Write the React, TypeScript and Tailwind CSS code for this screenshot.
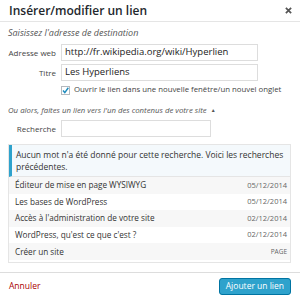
import React from "react";

const rows = [
  { t: "Éditeur de mise en page WYSIWYG", d: "05/12/2014", alt: true },
  { t: "Les bases de WordPress", d: "05/12/2014", alt: false },
  { t: "Accès à l'administration de votre site", d: "02/12/2014", alt: true },
  { t: "WordPress, qu'est ce que c'est ?", d: "02/12/2014", alt: false },
  { t: "Créer un site", d: "PAGE", alt: true },
];

export default function App() {
  return (
    <div
      className="w-[300px] h-[300px] bg-white flex flex-col text-[#444] overflow-hidden"
      style={{ fontFamily: '"Open Sans", "Liberation Sans", sans-serif' }}
    >
      <div className="h-[22px] shrink-0 border-b border-[#e5e5e5] flex items-center justify-between pl-[9px] pr-[8px]">
        <span className="text-[12px] font-semibold text-[#23282d] leading-none">Insérer/modifier un lien</span>
        <svg width="7" height="7" viewBox="0 0 8 8">
          <path d="M1 1 L7 7 M7 1 L1 7" stroke="#555" strokeWidth="2" />
        </svg>
      </div>
      <div className="pl-[8px] pr-[9px] pt-[5px] flex flex-col">
        <div className="text-[9px] italic text-[#555] leading-[12px] whitespace-nowrap">Saisissez l'adresse de destination</div>
        <div className="flex items-center mt-[5px] h-[17px]">
          <span className="w-[53px] text-right text-[8px] pr-[5px] whitespace-nowrap">Adresse web</span>
          <div className="w-[197px] h-[17px] border border-[#ddd] flex items-center px-[3px] text-[9.5px] text-[#222] whitespace-nowrap">http://fr.wikipedia.org/wiki/Hyperlien</div>
        </div>
        <div className="flex items-center mt-[3px] h-[17px]">
          <span className="w-[53px] text-right text-[8px] pr-[5px] whitespace-nowrap">Titre</span>
          <div className="w-[197px] h-[17px] border border-[#ddd] flex items-center px-[3px] text-[9.5px] text-[#222] whitespace-nowrap">Les Hyperliens</div>
        </div>
        <div className="flex items-center mt-[4px] h-[10px] pl-[53px]">
          <svg width="9" height="9" viewBox="0 0 9 9" className="mr-[4px] shrink-0">
            <rect x="0.5" y="0.5" width="8" height="8" fill="#fff" stroke="#b4b9be" />
            <path d="M2 4.6 L3.8 6.6 L7.3 1.8" stroke="#1e8cbe" strokeWidth="1.5" fill="none" />
          </svg>
          <span className="text-[7.8px] leading-none whitespace-nowrap">Ouvrir le lien dans une nouvelle fenêtre/un nouvel onglet</span>
        </div>
        <div className="text-[7.8px] italic text-[#555] mt-[10px] leading-[10px] flex items-center whitespace-nowrap">
          Ou alors, faites un lien vers l'un des contenus de votre site
          <span className="ml-[4px] text-[5px] not-italic">▲</span>
        </div>
        <div className="flex items-center mt-[5px] h-[17px]">
          <span className="w-[53px] text-right text-[8px] pr-[5px] whitespace-nowrap">Recherche</span>
          <div className="w-[150px] h-[17px] border border-[#ddd]"></div>
        </div>
        <div className="mt-[7px] border border-[#e5e5e5] h-[119px] flex flex-col">
          <div className="bg-[#f4f9fc] border-l-[3px] border-l-[#2ea2cc] border-b border-b-[#e5e5e5] pl-[4px] pr-[4px] pt-[4px] pb-[3px] text-[8.5px] leading-[12px] text-[#333]">
            Aucun mot n'a été donné pour cette recherche. Voici les recherches précédentes.
          </div>
          {rows.map((r) => (
            <div
              key={r.t}
              className={`flex items-center justify-between h-[16.6px] pl-[6px] pr-[3px] text-[8.2px] text-[#333] ${r.alt ? "bg-[#f7f7f7]" : "bg-white"}`}
            >
              <span className="whitespace-nowrap">{r.t}</span>
              <span className={r.d === "PAGE" ? "text-[6.5px] text-[#666]" : "text-[7.5px] text-[#666]"}>{r.d}</span>
            </div>
          ))}
        </div>
      </div>
      <div className="mt-[9px] flex-1 border-t border-[#ddd] flex items-center justify-between pl-[9px] pr-[9px]">
        <span className="text-[8.5px] text-[#a00]">Annuler</span>
        <div className="h-[17px] px-[6px] bg-[#2ea2cc] border border-[#0074a2] rounded-[3px] flex items-center text-[8.5px] text-white whitespace-nowrap">
          Ajouter un lien
        </div>
      </div>
    </div>
  );
}
